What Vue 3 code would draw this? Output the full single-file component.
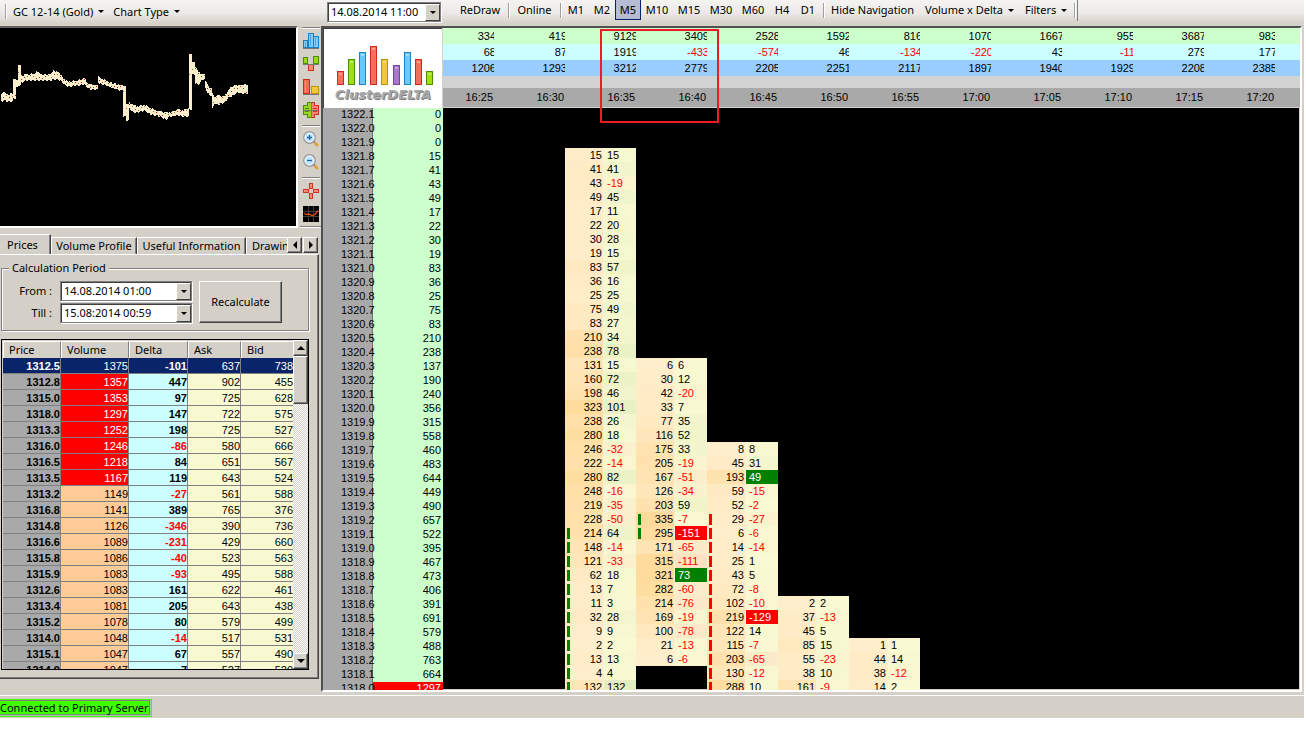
<script setup>
const frames = ['M1', 'M2', 'M5', 'M10', 'M15', 'M30', 'M60', 'H4', 'D1']

const summary = [
  { name: 'volume', values: [334, 419, 9129, 3409, 2528, 1592, 816, 1070, 1667, 955, 3687, 983] },
  { name: 'delta', values: [68, 87, 1919, -433, -574, 46, -134, -220, 43, -11, 279, 177] },
  { name: 'total', values: [1206, 1293, 3212, 2779, 2205, 2251, 2117, 1897, 1940, 1929, 2208, 2385] },
]
const times = ['16:25', '16:30', '16:35', '16:40', '16:45', '16:50', '16:55', '17:00', '17:05', '17:10', '17:15', '17:20']

const ladder = [
  0, 0, 0, 15, 41, 43, 49, 17, 22, 30, 19, 83, 36, 25, 75, 83, 210, 238, 137, 190, 240, 356, 315, 558, 460, 483, 644,
  449, 490, 657, 522, 395, 467, 473, 406, 391, 691, 579, 488, 763, 664, 1297,
].map((volume, i) => ({ price: ((13221 - i) / 10).toFixed(1), volume }))

const ROW = 14
const clusters = [
  {
    start: 3, bar: 'up', from: 27, to: 38, marks: {},
    rows: [[15, 15], [41, 41], [43, -19], [49, 45], [17, 11], [22, 20], [30, 28], [19, 15], [83, 57], [36, 16], [25, 25],
      [75, 49], [83, 27], [210, 34], [238, 78], [131, 15], [160, 72], [198, 46], [323, 101], [238, 26], [280, 18],
      [246, -32], [222, -14], [280, 82], [248, -16], [219, -35], [228, -50], [214, 64], [148, -14], [121, -33], [62, 18],
      [13, 7], [11, 3], [32, 28], [9, 9], [2, 2], [13, 13], [4, 4], [132, 132]],
  },
  {
    start: 18, bar: 'up', from: 11, to: 12, marks: { 12: 'sell', 15: 'buy' },
    rows: [[6, 6], [30, 12], [42, -20], [33, 7], [77, 35], [116, 52], [175, 33], [205, -19], [167, -51], [126, -34],
      [203, 59], [335, -7], [295, -151], [171, -65], [315, -111], [321, 73], [282, -60], [214, -76], [169, -19],
      [100, -78], [21, -13], [6, -6]],
  },
  {
    start: 24, bar: 'down', from: 5, to: 17, marks: { 2: 'buy', 12: 'sell' },
    rows: [[8, 8], [45, 31], [193, 49], [59, -15], [52, -2], [29, -27], [6, -6], [14, -14], [25, 1], [43, 5], [72, -8],
      [102, -10], [219, -129], [122, 14], [115, -7], [203, -65], [130, -12], [288, 10]],
  },
  { start: 35, bar: '', from: 1, to: 0, marks: {}, rows: [[2, 2], [37, -13], [45, 5], [85, 15], [55, -23], [38, 10], [161, -9]] },
  { start: 38, bar: '', from: 1, to: 0, marks: {}, rows: [[1, 1], [44, 14], [38, -12], [14, 2]] },
]

const mix = (a, b, t) => `rgb(${a.map((c, i) => Math.round(c + (b[i] - c) * Math.min(1, t))).join(',')})`
const volumeShade = (v) => mix([255, 238, 204], [255, 219, 155], v / 330)
const deltaShade = (d) =>
  d >= 0 ? mix([249, 249, 210], [226, 238, 190], d / 132) : mix([249, 249, 210], [252, 226, 194], -d / 111)

const prices = [
  ['1312.5', 1375, -101, 637, 738], ['1312.8', 1357, 447, 902, 455], ['1315.0', 1353, 97, 725, 628],
  ['1318.0', 1297, 147, 722, 575], ['1313.3', 1252, 198, 725, 527], ['1316.0', 1246, -86, 580, 666],
  ['1316.5', 1218, 84, 651, 567], ['1313.5', 1167, 119, 643, 524], ['1313.2', 1149, -27, 561, 588],
  ['1316.8', 1141, 389, 765, 376], ['1314.8', 1126, -346, 390, 736], ['1316.6', 1089, -231, 429, 660],
  ['1315.8', 1086, -40, 523, 563], ['1315.9', 1083, -93, 495, 588], ['1312.6', 1083, 161, 622, 461],
  ['1313.4', 1081, 205, 643, 438], ['1315.2', 1078, 80, 579, 499], ['1314.0', 1048, -14, 517, 531],
  ['1315.1', 1047, 67, 557, 490], ['1314.9', 1047, 7, 527, 520],
]

// Overview outline: x, top, bottom
const outline = [
  [1, 94, 101], [4, 93, 100], [7, 95, 101], [12, 94, 101], [13, 79, 98], [16, 80, 87], [18, 65, 85], [21, 76, 82],
  [26, 75, 80], [34, 74, 80], [36, 71, 80], [40, 75, 80], [50, 75, 80], [53, 71, 79], [58, 73, 79], [61, 76, 81], [65, 81, 85],
  [69, 82, 86], [76, 81, 85], [84, 79, 84], [88, 84, 88], [92, 85, 89], [98, 77, 82], [102, 79, 84], [107, 82, 85],
  [120, 86, 90], [123, 85, 89], [123, 86, 116], [126, 104, 120], [129, 103, 108], [133, 105, 112], [137, 107, 112],
  [144, 105, 110], [150, 108, 114], [155, 111, 115], [160, 112, 116], [166, 113, 119], [169, 113, 116],
  [178, 110, 115], [183, 111, 116], [188, 108, 116], [189, 54, 109], [192, 62, 74], [195, 67, 83],
  [198, 73, 84], [202, 74, 79], [205, 81, 88], [209, 88, 95], [212, 93, 108], [214, 97, 103], [218, 96, 104], [224, 97, 102],
  [228, 90, 97], [234, 85, 94], [237, 86, 92], [242, 85, 93], [248, 85, 93],
]
const candles = []
for (let k = 0; k < outline.length - 1; k++) {
  const [x0, t0, b0] = outline[k]
  const [x1, t1, b1] = outline[k + 1]
  for (let x = x0; x < x1; x++) {
    const f = (x - x0) / (x1 - x0)
    const steep = Math.abs(t1 - t0) > 7 || Math.abs(b1 - b0) > 7
    const j = ((x >> 1) * 7 + k) % 2
    const top = Math.round(steep ? t0 : t0 + (t1 - t0) * f) - (steep ? 0 : j)
    const bottom = Math.round(steep ? b0 : b0 + (b1 - b0) * f) + ((x >> 1) % 2)
    candles.push({ x, top, h: Math.max(4, bottom - top) })
  }
}
const dotColors = ['#e00000', '#404030', '#108010', '#c03020', '#807858']
const dots = candles.filter((c) => c.x % 3 === 0).map((c) => ({
  x: c.x, y: c.top + 1 + ((c.x * 13) % Math.max(1, c.h - 2)), fill: dotColors[(c.x + c.h) % 5],
}))

const logoBars = [
  [13, 43, 'red'], [24, 31, 'green'], [35, 24, 'blue'], [46, 18, 'red'], [57, 31, 'gold'],
  [69, 37, 'violet'], [80, 24, 'blue'], [91, 31, 'red'], [102, 43, 'green'],
]
const palette = {
  red: ['#f4705a', '#cc2a1e'], green: ['#a0e010', '#4c9000'], blue: ['#6cc8fa', '#1c84c4'],
  gold: ['#f2c440', '#c09010'], violet: ['#a878cc', '#704898'],
}
</script>

<template>
  <div class="app">
    <header class="toolbar">
      <nav class="bar bar-left" aria-label="Chart">
        <i class="sep"></i>
        <button class="tool">GC 12-14 (Gold)<span class="caret"></span></button>
        <button class="tool">Chart Type<span class="caret"></span></button>
      </nav>
      <label class="combo combo-top">
        <select aria-label="Chart date"><option>14.08.2014 11:00</option></select>
        <span class="drop"><span class="caret"></span></span>
      </label>
      <nav class="bar bar-main" aria-label="View">
        <button class="tool redraw">ReDraw</button>
        <i class="sep"></i>
        <button class="tool online">Online</button>
        <i class="sep"></i>
        <button v-for="f in frames" :key="f" class="tool frame" :class="{ wide: f.length > 2, active: f === 'M5' }">{{ f }}</button>
        <i class="sep"></i>
        <button class="tool hide-nav">Hide Navigation</button>
        <button class="tool menu">Volume x Delta<span class="caret"></span></button>
        <button class="tool menu">Filters<span class="caret"></span></button>
        <i class="sep"></i>
      </nav>
    </header>

    <main class="work">
      <aside class="side">
        <div class="top">
          <svg class="overview" viewBox="0 0 296 198" preserveAspectRatio="xMinYMin meet" shape-rendering="crispEdges" aria-label="Overview chart">
            <g transform="translate(0 -28)">
              <rect v-for="(c, i) in candles" :key="i" :x="c.x" :y="c.top" width="1" :height="c.h" fill="#fbeccb" />
              <rect v-for="(d, i) in dots" :key="'d' + i" :x="d.x" :y="d.y" width="1" height="1" :fill="d.fill" />
            </g>
          </svg>
          <div class="strip">
            <i class="rule first"></i>
            <button class="icon" aria-label="Volume bars">
              <svg viewBox="0 0 16 16" shape-rendering="crispEdges">
                <g fill="#82ccfc" stroke="#1a80c4"><path d="M.5 7.500h4v7h-4zM5.500.5h5v14h-5zM10.500 3.500h5v11h-5z" /></g>
                <path d="M2.500 9v5M7.500 2v11M12.500 5v8" stroke="#48a8ec" /><path d="M0 15.500h16" stroke="#777" />
              </svg>
            </button>
            <button class="icon" aria-label="Delta bars">
              <svg viewBox="0 0 16 16" shape-rendering="crispEdges">
                <g fill="#9cd818" stroke="#4c8c00"><path d="M.5 1.500h4v6h-4zM10.500.5h5v7h-5z" /></g>
                <path d="M5.500 8.500h5v6h-5z" fill="#f88870" stroke="#cc3020" /><path d="M0 8.500h16" stroke="#777" />
              </svg>
            </button>
            <button class="icon" aria-label="Volume and delta">
              <svg viewBox="0 0 16 16" shape-rendering="crispEdges">
                <path d="M.5.5h6v14h-6z" fill="#f46c58" stroke="#c82c20" /><path d="M8.500 7.500h7v7h-7z" fill="#f0c838" stroke="#c09010" />
                <path d="M2.500 2v11" stroke="#fc9484" /><path d="M0 15.500h16" stroke="#777" />
              </svg>
            </button>
            <button class="icon" aria-label="Cluster cross">
              <svg viewBox="0 0 16 16" shape-rendering="crispEdges">
                <path d="M4.500.5H8v15H4.500v-3h-4v-9h4z" fill="#98d420" stroke="#4c8c00" />
                <path d="M8 .5h3.500v3h4v9h-4v3H8z" fill="#f88870" stroke="#cc3020" />
                <path d="M2 6.500h4M2 9.500h4" stroke="#4c8c00" /><path d="M10 6.500h4M10 9.500h4" stroke="#cc3020" />
                <path d="M8.500 0v16M1 8.500h14" stroke="#777" />
              </svg>
            </button>
            <i class="rule"></i>
            <button v-for="z in ['in', 'out']" :key="z" class="icon" :aria-label="'Zoom ' + z">
              <svg viewBox="0 0 16 16">
                <path d="M10.500 10.500l2 2" stroke="#888" stroke-width="2" />
                <path d="M12.500 12.500l1.500 1.500" stroke="#e0a040" stroke-width="3" stroke-linecap="round" />
                <circle cx="6.500" cy="6.500" r="5.700" fill="#c4e6fc" stroke="#999" stroke-width="1.400" />
                <circle cx="6.500" cy="6.500" r="4.500" fill="none" stroke="#f4faff" />
                <path :d="z === 'in' ? 'M4 6.500h5M6.500 4v5' : 'M4 6.500h5'" stroke="#1a68a8" stroke-width="1.400" />
              </svg>
            </button>
            <i class="rule"></i>
            <button class="icon" aria-label="Crosshair">
              <svg viewBox="0 0 16 16" shape-rendering="crispEdges">
                <g fill="#f88c74" stroke="#cc3424"><path d="M6.500.5h3v5h-3zM6.500 10.500h3v5h-3zM.5 6.500h5v3h-5zM10.500 6.500h5v3h-5z" /></g>
              </svg>
            </button>
            <button class="icon" aria-label="Line chart">
              <svg viewBox="0 0 16 16">
                <path d="M0 0h16v16H0z" fill="#000" /><path d="M0 5.500h16M0 10.500h16M5.500 0v16M10.500 0v16" stroke="#3c3c3c" />
                <path d="M1 7.500l3 1 2-.500 3 1.500 3-1 3-4" fill="none" stroke="#f04c10" stroke-width="1.300" />
              </svg>
            </button>
            <i class="rule last"></i>
          </div>
        </div>

        <div class="tabs" role="tablist">
          <button class="tab current" role="tab">Prices</button>
          <button class="tab profile" role="tab">Volume Profile</button>
          <button class="tab useful" role="tab">Useful Information</button>
          <button class="tab drawing" role="tab">Drawin</button>
          <button class="scroll" aria-label="Previous tab"><span class="caret left"></span></button>
          <button class="scroll" aria-label="Next tab"><span class="caret right"></span></button>
        </div>

        <section class="panel">
          <fieldset class="period">
            <legend>Calculation Period</legend>
            <div class="fields">
              <label for="from">From :</label>
              <div class="combo">
                <select id="from"><option>14.08.2014 01:00</option></select>
                <span class="drop"><span class="caret"></span></span>
              </div>
              <label for="till">Till :</label>
              <div class="combo">
                <select id="till"><option>15.08:2014 00:59</option></select>
                <span class="drop"><span class="caret"></span></span>
              </div>
            </div>
            <button class="recalc">Recalculate</button>
          </fieldset>

          <div class="listing">
            <div class="list-body">
              <table class="prices">
                <colgroup><col class="c-price" /><col class="c-vol" /><col class="c-delta" /><col class="c-ask" /><col class="c-bid" /></colgroup>
                <thead>
                  <tr><th>Price</th><th>Volume</th><th>Delta</th><th>Ask</th><th>Bid</th></tr>
                </thead>
                <tbody>
                  <tr v-for="(r, i) in prices" :key="r[0]" :class="{ selected: i === 0, hot: i > 0 && i < 8 }">
                    <td class="p">{{ r[0] }}</td>
                    <td class="v">{{ r[1] }}</td>
                    <td class="d" :class="{ neg: r[2] < 0 }">{{ r[2] }}</td>
                    <td>{{ r[3] }}</td>
                    <td>{{ r[4] }}</td>
                  </tr>
                </tbody>
              </table>
            </div>
            <div class="scrollbar">
              <button class="arrow" aria-label="Scroll up"><span class="caret up"></span></button>
              <div class="thumb"></div>
              <button class="arrow down" aria-label="Scroll down"><span class="caret big"></span></button>
            </div>
          </div>
        </section>
      </aside>

      <section class="chart">
        <div class="head">
          <div class="logo">
            <svg viewBox="0 0 117 58" shape-rendering="crispEdges" aria-hidden="true">
              <g v-for="b in logoBars" :key="b[0]">
                <rect :x="b[0] + .5" :y="b[1] - .5" width="6" :height="56 - b[1]" :fill="palette[b[2]][0]" :stroke="palette[b[2]][1]" />
                <rect :x="b[0] + 2" :y="b[1] + 1" width="3" height="2" fill="#fff" opacity=".35" />
              </g>
            </svg>
            <span class="brand">ClusterDELTA</span>
          </div>
          <table class="summary">
            <colgroup><col class="first" /><col v-for="n in 11" :key="n" class="slot" /><col /></colgroup>
            <tbody>
              <tr v-for="s in summary" :key="s.name" :class="s.name">
                <td v-for="(v, i) in s.values" :key="i" :class="{ neg: v < 0 }"><span>{{ v }}</span></td><td></td>
              </tr>
              <tr class="blank"><td colspan="13"></td></tr>
              <tr class="times"><th v-for="t in times" :key="t">{{ t }}</th><td></td></tr>
            </tbody>
          </table>
          <div class="marker"></div>
        </div>
        <div class="body">
          <table class="ladder">
            <tbody>
              <tr v-for="l in ladder" :key="l.price">
                <th>{{ l.price }}</th>
                <td :class="{ peak: l.volume === 1297 }">{{ l.volume }}</td>
              </tr>
            </tbody>
          </table>
          <div class="clusters">
            <table v-for="c in clusters" :key="c.start" class="cluster" :style="{ marginTop: c.start * ROW - 2 + 'px' }">
              <tbody>
                <tr v-for="(r, i) in c.rows" :key="i">
                  <td class="cv" :class="i >= c.from && i <= c.to ? c.bar : ''" :style="{ backgroundColor: volumeShade(r[0]) }">{{ r[0] }}</td>
                  <td class="cd" :class="[c.marks[i], { neg: r[1] < 0 }]" :style="c.marks[i] ? null : { backgroundColor: deltaShade(r[1]) }">{{ r[1] }}</td>
                </tr>
              </tbody>
            </table>
          </div>
        </div>
      </section>
    </main>

    <footer class="status"><output>Connected to Primary Server</output></footer>
  </div>
</template>

<style>
body { background: #fff; overflow: hidden; }
</style>

<style scoped>
* { box-sizing: border-box; }
.app {
  display: flex; flex-direction: column; height: calc(100vh - 20px); margin-right: 2px; overflow: hidden;
  background: #d4d0c8; color: #000; font: 11px/14px "Noto Sans", "DejaVu Sans Condensed", sans-serif;
}
button, select { font: inherit; color: inherit; margin: 0; padding: 0; border: 0; border-radius: 0; background: none; white-space: nowrap; }
table { border-spacing: 0; border-collapse: separate; table-layout: fixed; }
td, th { padding: 0; font-weight: normal; }

.caret { display: inline-block; width: 0; height: 0; border: 3px solid transparent; border-top-color: #000; border-bottom: 0; flex: none; }
.caret.left { border: 4px solid transparent; border-right-color: #000; border-left: 0; }
.caret.right { border: 4px solid transparent; border-left-color: #000; border-right: 0; }
.caret.up { border: 4px solid transparent; border-bottom-color: #000; border-top: 0; }
.caret.big { border: 4px solid transparent; border-top-color: #000; border-bottom: 0; }

.toolbar { display: flex; flex: none; height: 26px; background: linear-gradient(#f5f4f2, #eceae6 50%, #d6d2ca 90%); }
.bar { display: flex; flex: none; align-items: flex-start; }
.bar-left { width: 327px; padding: 1px 0 0 3px; }
.bar-main { height: 21px; padding-left: 9px; border-right: 1px solid #808080; }
.tool { display: flex; align-items: center; justify-content: center; height: 20px; }
.tool .caret { margin-left: 5px; }
.bar-left .tool { padding: 0 4px 0 5px; height: 21px; }
.sep { width: 5px; height: 15px; margin-top: 3px; flex: none; background: linear-gradient(90deg, transparent 2px, #a0a0a0 2px, #a0a0a0 3px, #fff 3px, #fff 4px, transparent 4px); }
.redraw { width: 52px; }
.online { width: 47px; }
.frame { width: 26px; border: 1px solid transparent; border-top: 0; }
.frame.wide { width: 32px; }
.frame.active { background: #b6bdd2; border-color: #0a246a; }
.hide-nav { width: 93px; }
.menu { padding: 0 5px 0 6px; }

.combo { position: relative; display: block; height: 20px; border: 1px solid #808080; box-shadow: inset 1px 1px #404040, 1px 1px #fff; background: #fff; }
.combo select { appearance: none; display: block; width: 100%; height: 18px; padding-left: 3px; line-height: 18px; }
.drop { position: absolute; top: 1px; right: 0; width: 15px; height: 17px; display: flex; align-items: center; justify-content: center; pointer-events: none; background: #d4d0c8; border: 1px solid #fff; border-right-color: #404040; border-bottom-color: #404040; }
.combo-top { flex: none; width: 114px; margin: 2px 4px 0 0; }

.work { display: flex; flex: 1; min-height: 0; }
.side { display: flex; flex-direction: column; flex: none; width: 321px; }
.top { display: flex; flex: none; height: 208px; }
.overview { display: block; width: 298px; height: 202px; background: #000; border: 2px solid #fff; border-top-color: #606060; border-left: 0; }
.strip { display: flex; flex-direction: column; align-items: center; width: 21px; margin-left: 2px; }
.rule { flex: none; width: 18px; height: 2px; margin: 7px 0 4px; background: linear-gradient(#808080 1px, #fff 1px); }
.rule.first { margin: 1px 0 4px; }
.rule.last { margin: 4px 0 0; width: 21px; }
.icon { width: 16px; height: 16px; flex: none; }
.icon + .icon { margin-top: 7px; }
.icon svg { display: block; width: 16px; height: 16px; }

.tabs { position: relative; display: flex; flex: none; align-items: flex-end; height: 20px; overflow: hidden; }
.tab { height: 17px; flex: none; overflow: hidden; border-top: 1px solid #fff; border-right: 1px solid #404040; border-left: 1px solid #fff; box-shadow: inset -1px 0 #808080; }
.tab.current { height: 20px; width: 51px; padding: 0 5px 0 0; border-left: 0; }
.profile { width: 86px; }
.useful { width: 109px; }
.drawing { width: 41px; padding-left: 5px; text-align: left; border-right: 0; box-shadow: none; }
.scroll { display: flex; align-items: center; justify-content: center; width: 15px; height: 16px; margin: 0 1px 1px 0; border: 1px solid #fff; border-right-color: #404040; border-bottom-color: #404040; box-shadow: inset -1px -1px #808080; background: #d4d0c8; flex: none; }

.panel { display: flex; flex-direction: column; flex: 1; min-height: 0; margin: 0 2px 16px 0; padding: 6px 9px 8px 1px; border-top: 1px solid #fff; border-right: 1px solid #404040; border-bottom: 1px solid #404040; box-shadow: inset -1px -1px #808080; }
.period { display: flex; align-items: flex-start; flex: none; height: 70px; margin: 0 0 8px; padding: 6px 0 0; border: 1px solid #808080; box-shadow: inset 1px 1px #fff, 1px 1px #fff; min-width: 0; }
.period legend { margin-left: 7px; padding: 0 3px; height: 14px; background: #d4d0c8; }
.fields { display: grid; grid-template-columns: 50px 132px; grid-auto-rows: 20px; column-gap: 8px; row-gap: 2px; margin-right: 7px; align-items: center; }
.fields label { text-align: right; }
.recalc { width: 83px; height: 42px; border: 1px solid #fff; border-right-color: #404040; border-bottom-color: #404040; box-shadow: inset -1px -1px #808080; }

.listing { display: flex; flex: 1; min-height: 0; border: 1px solid #000; background: #d4d0c8; }
.list-body { flex: 1; min-width: 0; overflow: hidden; padding: 1px 0 0 1px; }
.prices { width: 100%; font: 11px/15px "Liberation Sans", Arial, sans-serif; }
.c-price { width: 58px; }
.c-vol { width: 68px; }
.c-delta { width: 59px; }
.c-ask { width: 53px; }
.prices th { height: 17px; padding: 0 0 0 5px; text-align: left; border-left: 1px solid #fff; border-top: 1px solid #fff; border-right: 1px solid #808080; font: 11px/14px "Noto Sans", "DejaVu Sans Condensed", sans-serif; }
.prices td { height: 16px; padding-top: 1px; line-height: 14px; text-align: right; background: #fafad2; border-right: 1px solid #808080; border-bottom: 1px solid #808080; }
.prices td:last-child, .prices th:last-child { border-right: 0; }
.prices .p { background: #a9a9a9; font-weight: bold; }
.prices .v { background: #ffcc99; }
.prices .d { background: #ccffff; font-weight: bold; }
.prices .hot .v { background: #f00; color: #fff; }
.prices .selected td { background: #0a246a; color: #fff; }
.neg { color: #f00; }
.scrollbar { display: flex; flex-direction: column; flex: none; width: 15px; background: repeating-conic-gradient(#fff 0 25%, #d4d0c8 0 50%) 0 0 / 2px 2px; }
.arrow, .thumb { flex: none; border: 1px solid #fff; border-right-color: #404040; border-bottom-color: #404040; box-shadow: inset -1px -1px #808080; background: #d4d0c8; }
.arrow { display: flex; align-items: center; justify-content: center; height: 16px; }
.arrow.down { margin-top: auto; }
.thumb { height: 48px; }

.chart { display: flex; flex-direction: column; flex: 1; min-width: 0; margin: 0 2px 3px 0; border: 2px solid #fff; border-top-color: #505050; border-left-color: #505050; box-shadow: inset -1px -1px #d4d0c8; background: #000; font: 11px/14px "Liberation Sans", Arial, sans-serif; }
.head { position: relative; display: flex; flex: none; height: 80px; background: #d4d0c8; }
.logo { width: 119px; flex: none; margin-right: 1px; padding-bottom: 1px; border-top: 1px solid #404040; border-left: 1px solid #404040; background: #fff; }
.logo svg { display: block; width: 117px; height: 58px; }
.brand { display: block; text-align: center; font: italic bold 13px/16px "DejaVu Sans", sans-serif; color: #a8a8a8; text-shadow: 1px 1px #808080; }
.summary { flex: 1; min-width: 0; height: 79px; }
.summary .first { width: 51px; }
.summary .slot { width: 71px; }
.summary td { height: 16px; line-height: 16px; overflow: hidden; }
.summary td span { display: block; margin-right: -2px; text-align: right; }
.summary .volume { background: #ccffcc; }
.summary .delta { background: #ccffff; }
.summary .total { background: #99ccff; }
.summary .blank { background: #d3d3d3; }
.summary .blank td { height: 12px; }
.summary .times { background: #a9a9a9; }
.summary th { height: 19px; line-height: 19px; text-align: right; padding-right: 1px; }
.marker { position: absolute; left: 277px; top: 1px; width: 119px; height: 94px; border: 2px solid #ed1c24; pointer-events: none; z-index: 1; }

.body { display: flex; flex: 1; min-height: 0; overflow: hidden; }
.ladder { width: 120px; flex: none; height: 588px; background: #ccffcc; line-height: 12px; }
.ladder th { width: 50px; height: 14px; padding-left: 18px; background: #a9a9a9; border-right: 1px solid #707070; text-align: left; white-space: nowrap; vertical-align: top; }
.ladder td { text-align: right; padding-right: 2px; vertical-align: top; }
.ladder .peak { background: #f00; color: #fff; }
.clusters { display: flex; align-items: flex-start; flex: 1; min-width: 0; padding-left: 122px; }
.cluster { flex: none; width: 71px; }
.cluster td { height: 14px; }
.cv { width: 39px; padding-right: 1px; text-align: right; border-right: 1px solid #fdf2d6; background-repeat: no-repeat; background-size: 3px 11px; background-position: 2px 2px; }
.cv.up { background-image: linear-gradient(#008000, #008000); }
.cv.down { background-image: linear-gradient(#f00, #f00); }
.cd { width: 32px; padding-left: 3px; }
.buy { background: #008000; color: #fff; }
.sell { background: #f00; color: #fff; }

.status { display: flex; flex: none; height: 23px; align-items: flex-start; padding-top: 3px; border-top: 1px solid #fff; }
.status output { display: block; height: 18px; padding-right: 2px; background: #40ff00; border: 1px solid #40ff00; border-left: 0; box-shadow: inset -1px -1px #a0c8a0, inset 0 1px #808080, inset -2px -2px #808080; line-height: 16px; }
</style>
